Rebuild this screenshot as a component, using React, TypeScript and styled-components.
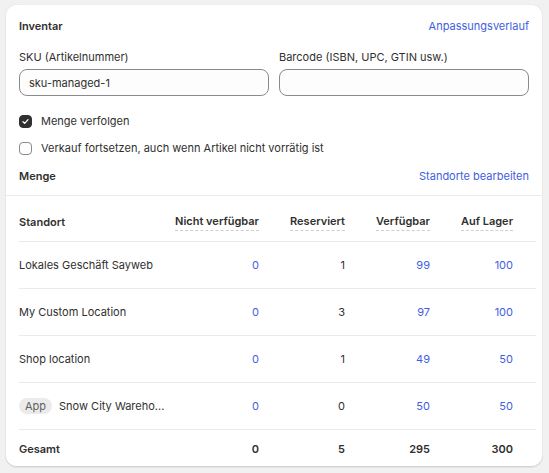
import React from 'react'
import styled, { createGlobalStyle } from 'styled-components'

const GlobalStyle = createGlobalStyle`
  * { box-sizing: border-box; }
  html, body {
    margin: 0;
    padding: 0;
    background: #f1f1f1;
  }
  body {
    font-family: Inter, "Noto Sans", "Liberation Sans", sans-serif;
    font-size: 11px;
    color: #303030;
  }
`

const Card = styled.div`
  margin: 4px 6px 6px 5px;
  background: #ffffff;
  border-radius: 12px;
  overflow: hidden;
  box-shadow: 0 1px 0 rgba(26, 26, 26, 0.07), inset 0 -1px 0 #d4d4d4,
    inset 1px 0 0 #e8e8e8, inset -1px 0 0 #e8e8e8, inset 0 1px 0 #ededed;
`

const TopSection = styled.div`
  padding: 14px 14px 11px 14px;
  border-bottom: 1px solid #ebebeb;
`

const HeaderRow = styled.div`
  display: flex;
  justify-content: space-between;
  align-items: center;
  height: 16px;
  line-height: 16px;
`

const Title = styled.span`
  font-weight: 600;
`

const Link = styled.a`
  color: #3f5ee0;
  text-decoration: none;
  cursor: pointer;
`

const Fields = styled.div`
  display: grid;
  grid-template-columns: 1fr 1fr;
  column-gap: 10px;
  margin-top: 15px;
`

const Field = styled.label`
  display: flex;
  flex-direction: column;
`

const FieldLabel = styled.span`
  line-height: 16px;
  margin-bottom: 4px;
`

const Input = styled.input`
  height: 27px;
  border: 1px solid #8a8a8a;
  border-radius: 8px;
  background: #fdfdfd;
  padding: 0 9px;
  font: inherit;
  color: #303030;
  outline: none;
`

const CheckRow = styled.label<{ $top: number }>`
  display: flex;
  align-items: center;
  gap: 9px;
  height: 16px;
  line-height: 16px;
  margin-top: ${(p) => p.$top}px;
`

const Box = styled.span<{ $checked: boolean }>`
  width: 13px;
  height: 13px;
  border-radius: 4px;
  flex-shrink: 0;
  display: flex;
  align-items: center;
  justify-content: center;
  background: ${(p) => (p.$checked ? '#303030' : '#ffffff')};
  border: 1px solid ${(p) => (p.$checked ? '#303030' : '#8a8a8a')};
`

const SectionRow = styled(HeaderRow)`
  margin-top: 12px;
`

const Table = styled.div`
  padding-left: 14px;
  padding-right: 7px;
`

const Row = styled.div<{ $height: number; $last?: boolean }>`
  display: grid;
  grid-template-columns: 1fr 86px 86px 85px 83px;
  padding-right: 23px;
  align-items: center;
  height: ${(p) => p.$height}px;
  border-bottom: ${(p) => (p.$last ? 'none' : '1px solid #ebebeb')};
`

const HeadRow = styled(Row)`
  align-items: end;
  padding-bottom: 10px;
`

const Cell = styled.div<{ $link?: boolean; $bold?: boolean }>`
  text-align: right;
  color: ${(p) => (p.$link ? '#3f5ee0' : '#303030')};
  font-weight: ${(p) => (p.$bold ? 600 : 400)};
  white-space: nowrap;
`

const NameCell = styled.div<{ $bold?: boolean }>`
  display: flex;
  align-items: center;
  gap: 7px;
  min-width: 0;
  font-weight: ${(p) => (p.$bold ? 600 : 400)};
  white-space: nowrap;
`

const HeadName = styled(NameCell)`
  line-height: 16px;
  padding-bottom: 1px;
`

const Badge = styled.span`
  display: inline-flex;
  align-items: center;
  height: 16px;
  padding: 0 6px;
  border-radius: 8px;
  background: #ebebeb;
  color: #616161;
`

const HeadText = styled.span`
  display: inline-block;
  line-height: 16px;
  font-weight: 600;
  padding-bottom: 1px;
  border-bottom: 1px dashed #cfcfcf;
`

const Check = () => (
  <svg width="9" height="9" viewBox="0 0 10 10" fill="none">
    <path
      d="M2.2 5.3 L4.1 7.1 L7.8 2.9"
      stroke="#ffffff"
      strokeWidth="1.4"
      strokeLinecap="round"
      strokeLinejoin="round"
    />
  </svg>
)

const rows = [
  { name: 'Lokales Geschäft Sayweb', na: 0, res: 1, avail: 99, stock: 100 },
  { name: 'My Custom Location', na: 0, res: 3, avail: 97, stock: 100 },
  { name: 'Shop location', na: 0, res: 1, avail: 49, stock: 50 },
  { name: 'Snow City Wareho...', na: 0, res: 0, avail: 50, stock: 50, app: true },
]

export default function App() {
  return (
    <>
      <GlobalStyle />
      <Card>
        <TopSection>
          <HeaderRow>
            <Title>Inventar</Title>
            <Link>Anpassungsverlauf</Link>
          </HeaderRow>
          <Fields>
            <Field>
              <FieldLabel>SKU (Artikelnummer)</FieldLabel>
              <Input defaultValue="sku-managed-1" />
            </Field>
            <Field>
              <FieldLabel>Barcode (ISBN, UPC, GTIN usw.)</FieldLabel>
              <Input defaultValue="" />
            </Field>
          </Fields>
          <CheckRow $top={17}>
            <Box $checked>
              <Check />
            </Box>
            Menge verfolgen
          </CheckRow>
          <CheckRow $top={11}>
            <Box $checked={false} />
            Verkauf fortsetzen, auch wenn Artikel nicht vorrätig ist
          </CheckRow>
          <SectionRow>
            <Title>Menge</Title>
            <Link>Standorte bearbeiten</Link>
          </SectionRow>
        </TopSection>
        <Table>
          <HeadRow $height={46}>
            <HeadName $bold>Standort</HeadName>
            <Cell>
              <HeadText>Nicht verfügbar</HeadText>
            </Cell>
            <Cell>
              <HeadText>Reserviert</HeadText>
            </Cell>
            <Cell>
              <HeadText>Verfügbar</HeadText>
            </Cell>
            <Cell>
              <HeadText>Auf Lager</HeadText>
            </Cell>
          </HeadRow>
          {rows.map((r) => (
            <Row key={r.name} $height={47}>
              <NameCell>
                {r.app && <Badge>App</Badge>}
                <span>{r.name}</span>
              </NameCell>
              <Cell $link>{r.na}</Cell>
              <Cell>{r.res}</Cell>
              <Cell $link>{r.avail}</Cell>
              <Cell $link>{r.stock}</Cell>
            </Row>
          ))}
          <Row $height={37} $last>
            <NameCell $bold>Gesamt</NameCell>
            <Cell $bold>0</Cell>
            <Cell $bold>5</Cell>
            <Cell $bold>295</Cell>
            <Cell $bold>300</Cell>
          </Row>
        </Table>
      </Card>
    </>
  )
}
